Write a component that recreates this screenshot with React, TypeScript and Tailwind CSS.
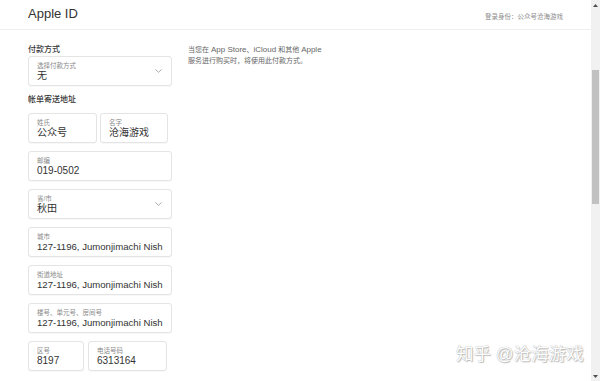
import React from "react";

const font = { fontFamily: '"Liberation Sans", "Noto Sans CJK SC", sans-serif' };

function Chevron() {
  return (
    <svg width="7" height="4" viewBox="0 0 7 4" className="shrink-0">
      <path d="M0.5 0.5 L3.5 3.3 L6.5 0.5" fill="none" stroke="#a0a0a0" strokeWidth="0.9" />
    </svg>
  );
}

function Field({
  label,
  value,
  w,
  select,
  small,
}: {
  label: string;
  value: string;
  w: string;
  select?: boolean;
  small?: boolean;
}) {
  return (
    <div
      className={`${w} h-[30px] shrink-0 rounded-[3px] border border-[#e4e4e4] bg-white flex items-center pl-[8px] pr-[6px] shadow-[0_1px_1px_rgba(0,0,0,0.03)]`}
    >
      <div className="flex-1 min-w-0 pt-[2px]">
        <div className="text-[6.5px] leading-[8px] text-[#8a8a8a] whitespace-nowrap">{label}</div>
        <div
          className={`${small ? "text-[9.6px]" : "text-[10px]"} leading-[12px] text-[#333333] whitespace-nowrap`}
        >
          {value}
        </div>
      </div>
      {select && (
        <div className="pl-[4px] pr-[3px]">
          <Chevron />
        </div>
      )}
    </div>
  );
}

export default function App() {
  const addr = "127-1196, Jumonjimachi Nish";
  return (
    <div className="w-[600px] h-[381px] flex bg-white overflow-hidden relative" style={font}>
      <div className="flex-1 flex flex-col">
        <div className="h-[30px] shrink-0 border-b border-[#efefef] flex items-center justify-between pl-[28px] pr-[28px]">
          <div className="text-[13px] leading-[16px] text-[#333333] -mt-[2px]">Apple ID</div>
          <div className="text-[6.5px] leading-[8px] text-[#8c8c8c] mt-[4px]">登录身份：公众号沧海游戏</div>
        </div>
        <div className="flex pl-[28px] pt-[15px]">
          <div className="w-[144px] flex flex-col">
            <div className="text-[8px] leading-[10px] text-[#333333] font-medium">付款方式</div>
            <div className="mt-[1px]">
              <Field label="选择付款方式" value="无" w="w-[144px]" select />
            </div>
            <div className="mt-[9px] text-[8px] leading-[10px] text-[#333333] font-medium">帐单寄送地址</div>
            <div className="mt-[8px] flex flex-col gap-[8px]">
              <div className="flex gap-[3px]">
                <Field label="姓氏" value="公众号" w="w-[69px]" />
                <Field label="名字" value="沧海游戏" w="w-[68px]" />
              </div>
              <Field label="邮编" value="019-0502" w="w-[144px]" />
              <Field label="省/市" value="秋田" w="w-[144px]" select />
              <Field label="城市" value={addr} w="w-[144px]" small />
              <Field label="街道地址" value={addr} w="w-[144px]" small />
              <Field label="楼号、单元号、房间号" value={addr} w="w-[144px]" small />
              <div className="flex gap-[4px]">
                <Field label="区号" value="8197" w="w-[56px]" />
                <Field label="电话号码" value="6313164" w="w-[79px]" />
              </div>
            </div>
          </div>
          <div className="ml-[16px] -mt-[1px] text-[7px] leading-[11px] text-[#666666]">
            <div>
              当您在 <span className="text-[8px]">App Store</span>、<span className="text-[8px]">iCloud</span> 和其他{" "}
              <span className="text-[8px]">Apple</span>
            </div>
            <div>服务进行购买时，将使用此付款方式。</div>
          </div>
        </div>
      </div>
      <div className="w-[9px] h-full bg-[#f1f1f1] flex flex-col items-stretch shrink-0">
        <div className="h-[10px] flex items-center justify-center">
          <svg width="5" height="3" viewBox="0 0 5 3">
            <path d="M0 3 L2.5 0 L5 3 Z" fill="#505050" />
          </svg>
        </div>
        <div className="h-[60px]" />
        <div className="h-[134px] mx-[1px] bg-[#c1c1c1]" />
        <div className="flex-1" />
        <div className="h-[10px] flex items-center justify-center">
          <svg width="5" height="3" viewBox="0 0 5 3">
            <path d="M0 0 L2.5 3 L5 0 Z" fill="#505050" />
          </svg>
        </div>
      </div>
      <div
        className="absolute left-[456px] top-[343px] text-[17.5px] leading-[22px] text-white whitespace-nowrap"
        style={{ textShadow: "0 0 1px #9a9a9a, 1px 1px 1px rgba(0,0,0,0.25)" }}
      >
        知乎 @沧海游戏
      </div>
    </div>
  );
}
